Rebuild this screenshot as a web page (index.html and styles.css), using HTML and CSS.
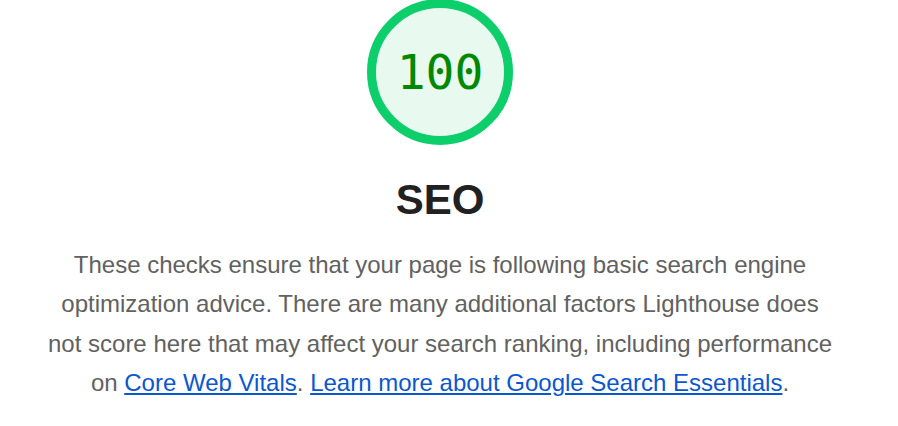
FILE: index.html
```html
<!DOCTYPE html>
<html>
<head>
<meta charset="utf-8">
<link rel="stylesheet" href="styles.css">
</head>
<body>
<div class="wrap">
  <div class="gauge">
    <svg class="ring" width="146" height="146" viewBox="0 0 146 146">
      <circle cx="73" cy="73" r="68.5" fill="#e8f9f0" stroke="#0ccf6b" stroke-width="9"/>
    </svg>
    <span class="score">100</span>
  </div>
  <h1 class="title">SEO</h1>
  <p class="desc">These checks ensure that your page is following basic search engine optimization advice. There are many additional factors Lighthouse does not score here that may affect your search ranking, including performance on <a href="#">Core Web Vitals</a>. <a href="#">Learn more about Google Search Essentials</a>.</p>
</div>
</body>
</html>
```
FILE: styles.css
```css
html, body { margin: 0; padding: 0; background: #fff; }
.wrap {
  width: 880px;
  display: flex;
  flex-direction: column;
  align-items: center;
  font-family: "Liberation Sans", Arial, sans-serif;
}
.gauge {
  position: relative;
  width: 146px;
  height: 146px;
  margin-top: -1px;
}
.ring { display: block; }
.score {
  position: absolute;
  inset: 0;
  display: flex;
  align-items: center;
  justify-content: center;
  font-family: "DejaVu Sans Mono", monospace;
  font-size: 48px;
  color: #008800;
}
.title {
  margin: 30px 0 0;
  font-size: 42px;
  line-height: 50px;
  font-weight: bold;
  color: #212121;
}
.desc {
  margin: 20px 0 0;
  width: 796px;
  text-align: center;
  font-size: 24px;
  line-height: 39.3px;
  color: #616161;
}
.desc a { color: #0b57d0; text-decoration: underline; }
```
